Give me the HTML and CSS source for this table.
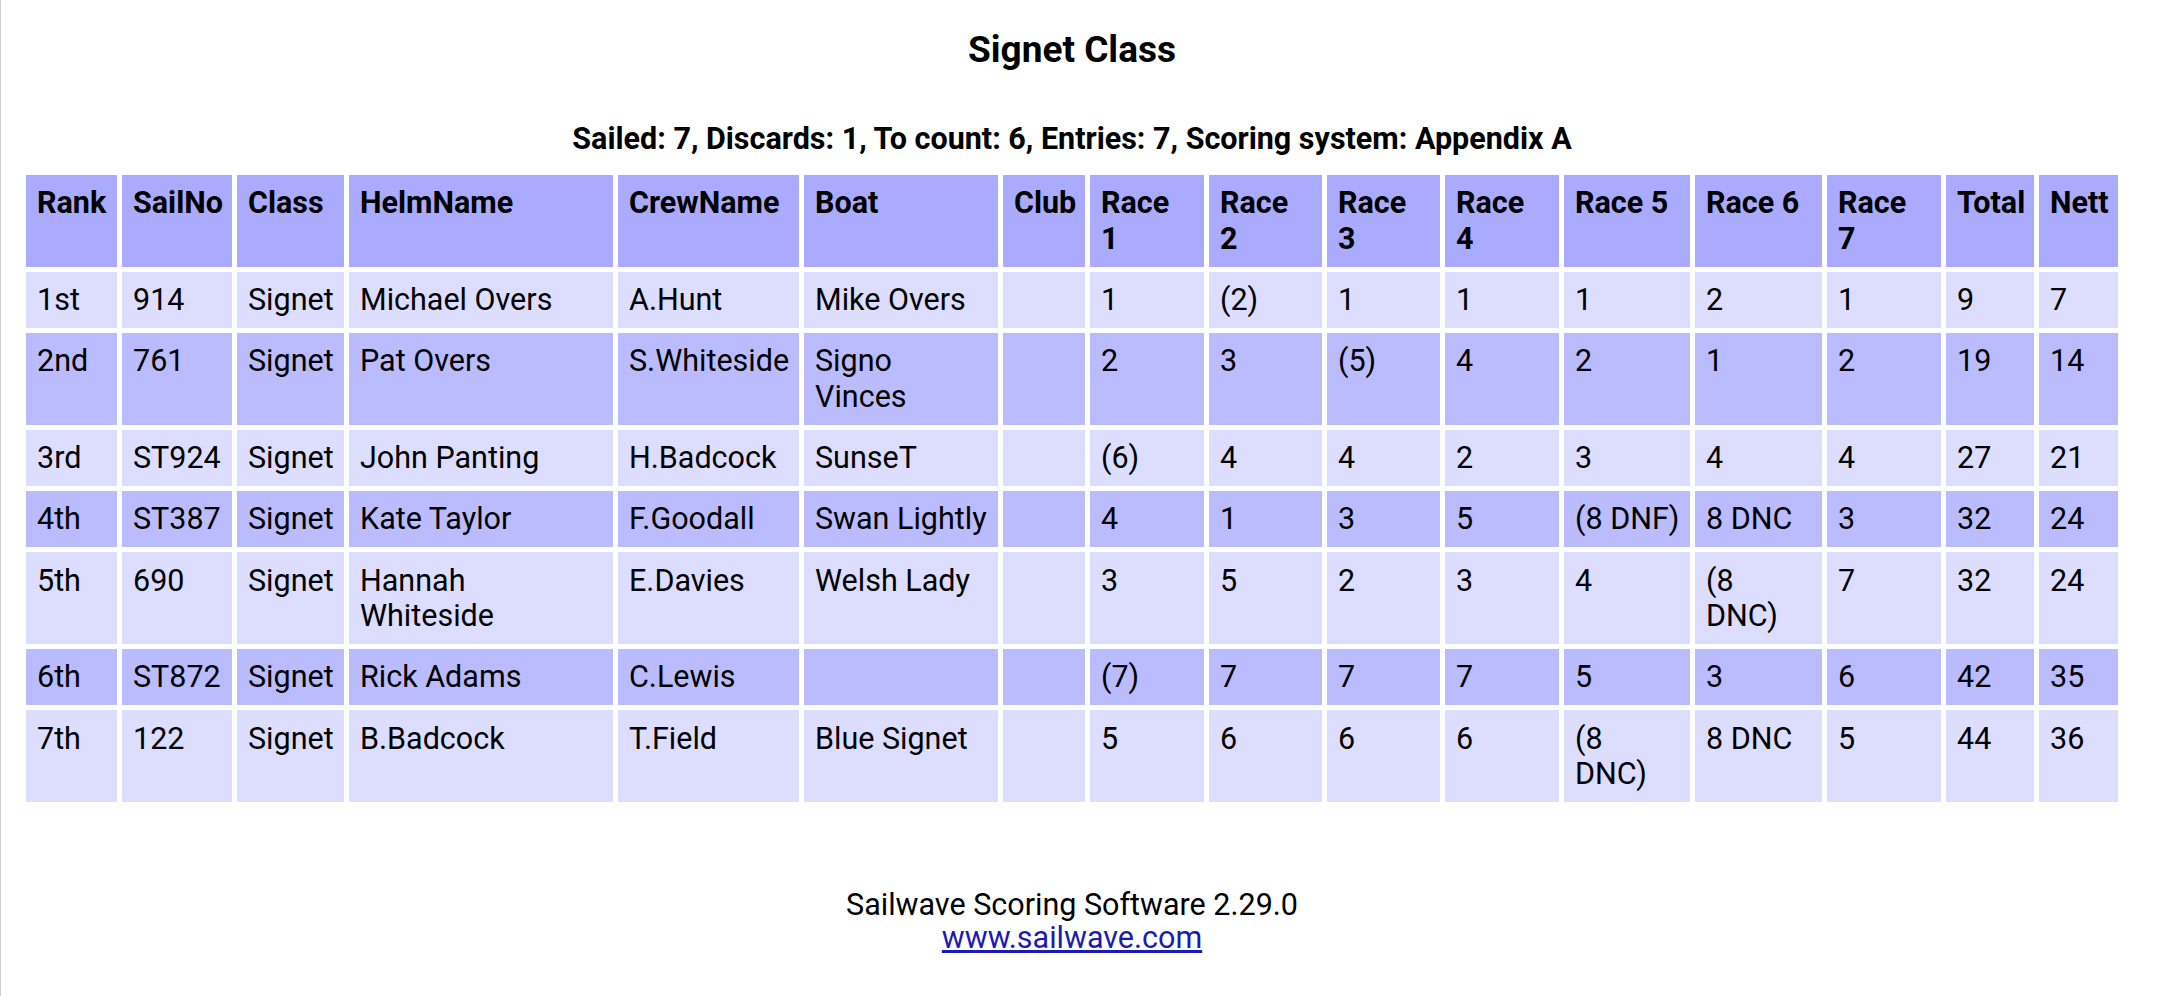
FILE: index.html
```html
<!DOCTYPE html>
<html lang="en">
<head>
<meta charset="utf-8">
<title>Signet Class</title>
<link rel="stylesheet" href="styles.css">
</head>
<body>
<h1 class="title">Signet Class</h1>
<h2 class="summary">Sailed: 7, Discards: 1, To count: 6, Entries: 7, Scoring system: Appendix A</h2>
<table class="results">
<colgroup>
<col class="c-rank"><col class="c-sail"><col class="c-class"><col class="c-helm"><col class="c-crew"><col class="c-boat"><col class="c-club"><col class="c-r1"><col class="c-r2"><col class="c-r3"><col class="c-r4"><col class="c-r5"><col class="c-r6"><col class="c-r7"><col class="c-total"><col class="c-nett">
</colgroup>
<thead>
<tr><th>Rank</th><th>SailNo</th><th>Class</th><th>HelmName</th><th>CrewName</th><th>Boat</th><th>Club</th><th>Race 1</th><th>Race 2</th><th>Race 3</th><th>Race 4</th><th>Race 5</th><th>Race 6</th><th>Race 7</th><th>Total</th><th>Nett</th></tr>
</thead>
<tbody>
<tr class="odd"><td>1st</td><td>914</td><td>Signet</td><td>Michael Overs</td><td>A.Hunt</td><td>Mike Overs</td><td></td><td>1</td><td>(2)</td><td>1</td><td>1</td><td>1</td><td>2</td><td>1</td><td>9</td><td>7</td></tr>
<tr class="even"><td>2nd</td><td>761</td><td>Signet</td><td>Pat Overs</td><td class="nowrap">S.Whiteside</td><td>Signo Vinces</td><td></td><td>2</td><td>3</td><td>(5)</td><td>4</td><td>2</td><td>1</td><td>2</td><td>19</td><td>14</td></tr>
<tr class="odd"><td>3rd</td><td>ST924</td><td>Signet</td><td>John Panting</td><td>H.Badcock</td><td>SunseT</td><td></td><td>(6)</td><td>4</td><td>4</td><td>2</td><td>3</td><td>4</td><td>4</td><td>27</td><td>21</td></tr>
<tr class="even"><td>4th</td><td>ST387</td><td>Signet</td><td>Kate Taylor</td><td>F.Goodall</td><td class="nowrap">Swan Lightly</td><td></td><td>4</td><td>1</td><td>3</td><td>5</td><td class="nowrap">(8 DNF)</td><td class="nowrap">8 DNC</td><td>3</td><td>32</td><td>24</td></tr>
<tr class="odd"><td>5th</td><td>690</td><td>Signet</td><td>Hannah Whiteside</td><td>E.Davies</td><td>Welsh Lady</td><td></td><td>3</td><td>5</td><td>2</td><td>3</td><td>4</td><td>(8 DNC)</td><td>7</td><td>32</td><td>24</td></tr>
<tr class="even"><td>6th</td><td>ST872</td><td>Signet</td><td>Rick Adams</td><td>C.Lewis</td><td></td><td></td><td>(7)</td><td>7</td><td>7</td><td>7</td><td>5</td><td>3</td><td>6</td><td>42</td><td>35</td></tr>
<tr class="odd"><td>7th</td><td>122</td><td>Signet</td><td>B.Badcock</td><td>T.Field</td><td>Blue Signet</td><td></td><td>5</td><td>6</td><td>6</td><td>6</td><td>(8 DNC)</td><td class="nowrap">8 DNC</td><td>5</td><td>44</td><td>36</td></tr>
</tbody>
</table>
<footer class="credits">
<div class="credits-line">Sailwave Scoring Software 2.29.0</div>
<a class="credits-link" href="#">www.sailwave.com</a>
</footer>
</body>
</html>
```

FILE: styles.css
```css
html {
  background: #ffffff;
}
body {
  margin: 0;
  min-height: 100vh;
  box-sizing: border-box;
  border-left: 1px solid #d2d2d2;
  padding: 28px 42px 0 20px;
  font-family: Roboto, "Liberation Sans", sans-serif;
  color: #000000;
}
.title {
  margin: 0;
  font-size: 37px;
  line-height: 44px;
  font-weight: 700;
  text-align: center;
}
.summary {
  margin: 49px 0 0;
  font-size: 30.5px;
  line-height: 36px;
  font-weight: 700;
  text-align: center;
}
.results {
  margin-top: 13px;
  width: 2102px;
  table-layout: fixed;
  border-collapse: separate;
  border-spacing: 5px;
  font-size: 30.5px;
  line-height: 35.4px;
}
.results th,
.results td {
  padding: 10.45px 11px;
  text-align: left;
  vertical-align: top;
}
.results th {
  background: #aaaaff;
  font-weight: 700;
}
.results .odd td {
  background: #ddddff;
}
.results .even td {
  background: #bbbbff;
}
.results .nowrap {
  white-space: nowrap;
}
.c-rank { width: 91px; }
.c-sail { width: 110px; }
.c-class { width: 107px; }
.c-helm { width: 264px; }
.c-crew { width: 181px; }
.c-boat { width: 194px; }
.c-club { width: 82px; }
.c-r1 { width: 114px; }
.c-r2 { width: 113px; }
.c-r3 { width: 113px; }
.c-r4 { width: 114px; }
.c-r5 { width: 126px; }
.c-r6 { width: 127px; }
.c-r7 { width: 114px; }
.c-total { width: 88px; }
.c-nett { width: 79px; }
.credits {
  margin-top: 81px;
  text-align: center;
  font-size: 30.5px;
  line-height: 33px;
}
.credits-line {
  display: block;
}
.credits-link {
  color: #1a1ab4;
  text-decoration: underline;
}
```
